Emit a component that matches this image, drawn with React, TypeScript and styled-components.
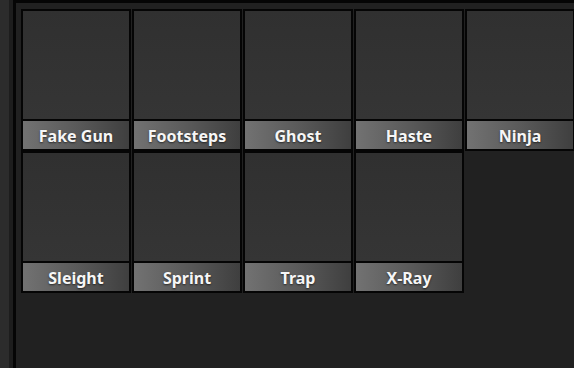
import React from 'react';
import styled, { createGlobalStyle } from 'styled-components';

const abilities = [
  'Fake Gun',
  'Footsteps',
  'Ghost',
  'Haste',
  'Ninja',
  'Sleight',
  'Sprint',
  'Trap',
  'X-Ray',
];

const GlobalStyle = createGlobalStyle`
  html, body {
    margin: 0;
    padding: 0;
    background: #212121;
    overflow: hidden;
  }
  * {
    box-sizing: border-box;
  }
`;

const App = () => {
  return (
    <>
      <GlobalStyle />
      <Screen>
        <SideStrip />
        <SideRail />
        <Panel>
          <Grid>
            {abilities.map((name) => (
              <Card key={name}>
                <Preview />
                <Label>{name}</Label>
              </Card>
            ))}
          </Grid>
        </Panel>
      </Screen>
    </>
  );
};

export default App;

const Screen = styled.div`
  display: flex;
  width: 574px;
  height: 368px;
  background: #212121;
`;

const SideStrip = styled.div`
  width: 9px;
  flex-shrink: 0;
  background: #2c2c2c;
`;

const SideRail = styled.div`
  width: 4px;
  flex-shrink: 0;
  background: #1d1d1d;
`;

const Panel = styled.div`
  flex: 1;
  background: #212121;
  border-left: 3px solid #050505;
  border-top: 3px solid #050505;
  padding: 6px 0 0 5px;
  overflow: hidden;
`;

const Grid = styled.div`
  display: grid;
  grid-template-columns: repeat(5, 110px);
  grid-auto-rows: 142px;
  column-gap: 1px;
  row-gap: 0;
`;

const Card = styled.div`
  display: flex;
  flex-direction: column;
  border: 2px solid #050505;
  background: #050505;
`;

const Preview = styled.div`
  height: 110px;
  background: linear-gradient(to bottom, #303030, #353535);
  border-bottom: 2px solid #050505;
`;

const Label = styled.div`
  flex: 1;
  display: flex;
  align-items: center;
  justify-content: center;
  background: linear-gradient(to right, #727272 0%, #5a5a5a 50%, #3f3f3f 100%);
  color: #f6f6f6;
  font-family: 'Noto Sans', 'Open Sans', sans-serif;
  font-weight: 700;
  font-size: 16px;
  line-height: 1;
  padding-top: 1px;
  text-shadow: 0 1px 2px rgba(0, 0, 0, 0.6);
`;
